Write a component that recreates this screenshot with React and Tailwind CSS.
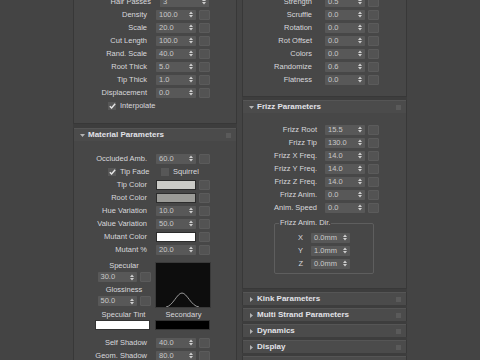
import React from 'react';

const Arrows = () => (
  <svg width="4" height="7" viewBox="0 0 4 7" className="shrink-0">
    <path d="M0 3 L2 0.5 L4 3 Z M0 4 L2 6.5 L4 4 Z" fill="#cfcfcf" />
  </svg>
);

const Spin = ({ value, w = 'w-[40px]' }) => (
  <div className={`${w} h-[10px] bg-[#585858] rounded-[1px] flex items-center justify-between pl-[3px] pr-[3px] text-[#c8c8c8]`}>
    <span className="leading-none">{value}</span>
    <Arrows />
  </div>
);

const Sq = () => <div className="w-[11px] h-[10px] ml-[3px] bg-[#535353] border border-[#5b5b5b] rounded-[1px]" />;

const Row = ({ label, value, pad, swatch }) => (
  <div className="flex items-center h-[13px]">
    <div className={`w-[82px] text-right leading-none ${pad}`}>{label}</div>
    {swatch ? (
      <div className={`w-[40px] h-[10px] border border-[#2c2c2c] ${swatch}`} />
    ) : (
      <Spin value={value} />
    )}
    <Sq />
  </div>
);

const Check = ({ on }) => (
  <div className="w-[8px] h-[8px] bg-[#575757] flex items-center justify-center">
    {on && (
      <svg width="7" height="6" viewBox="0 0 7 6">
        <path d="M0.8 3.2 L2.6 5 L6.2 0.8" stroke="#e6e6e6" strokeWidth="1.4" fill="none" />
      </svg>
    )}
  </div>
);

const Header = ({ title, open }) => (
  <div className="h-[13px] bg-[#4b4b4b] border-t border-[#555] flex items-center pl-[6px] pr-[5px]">
    <svg width="5" height="5" viewBox="0 0 5 5" className="shrink-0">
      {open ? <path d="M0 1 L5 1 L2.5 4 Z" fill="#b4b4b4" /> : <path d="M1 0 L4 2.5 L1 5 Z" fill="#b4b4b4" />}
    </svg>
    <span className="ml-[3px] font-bold text-[8px] text-[#e2e2e8] leading-none">{title}</span>
    <div className="ml-auto w-[5px] h-[5px] bg-[#5a5a5a]" />
  </div>
);

const hair = [
  ['Density', '100.0'],
  ['Scale', '20.0'],
  ['Cut Length', '100.0'],
  ['Rand. Scale', '40.0'],
  ['Root Thick', '5.0'],
  ['Tip Thick', '1.0'],
  ['Displacement', '0.0'],
];

const kink = [
  ['Scruffle', '0.0'],
  ['Rotation', '0.0'],
  ['Rot Offset', '0.0'],
  ['Colors', '0.0'],
  ['Randomize', '0.6'],
  ['Flatness', '0.0'],
];

const frizz = [
  ['Frizz Root', '15.5'],
  ['Frizz Tip', '130.0'],
  ['Frizz X Freq.', '14.0'],
  ['Frizz Y Freq.', '14.0'],
  ['Frizz Z Freq.', '14.0'],
  ['Frizz Anim.', '0.0'],
  ['Anim. Speed', '0.0'],
];

export default function App() {
  return (
    <div className="w-[480px] h-[360px] overflow-hidden bg-[#444444] flex font-['Liberation_Sans',Arial,sans-serif] text-[7.5px] text-[#d8d8dc]">
      <div className="w-[73px] shrink-0" />

      {/* left column */}
      <div className="w-[164px] shrink-0 bg-[#3d3d3d] flex flex-col gap-[4px]">
        <div className="-mt-[5px] bg-[#474747] border-x border-b border-[#383838] pb-[11px]">
          <div className="flex items-center h-[13px]">
            <div className="w-[86px] text-right pr-[9px] leading-none">Hair Passes</div>
            <div className="w-[49px] h-[10px] bg-[#585858] flex items-center justify-between pl-[3px] pr-[3px] text-[#c8c8c8]">
              <span className="leading-none">3</span>
              <Arrows />
            </div>
          </div>
          {hair.map(([l, v]) => (
            <Row key={l} label={l} value={v} pad="pr-[9px]" />
          ))}
          <div className="flex items-center h-[13px] pl-[34px]">
            <Check on />
            <span className="ml-[4px] leading-none">Interpolate</span>
          </div>
        </div>

        <div className="bg-[#474747] border-x border-[#383838] flex-1">
          <Header title="Material Parameters" open />
          <div className="pt-[11px]">
            <Row label="Occluded Amb." value="60.0" pad="pr-[9px]" />
            <div className="flex items-center h-[13px] pl-[34px]">
              <Check on />
              <span className="ml-[4px] leading-none w-[41px]">Tip Fade</span>
              <Check />
              <span className="ml-[4px] leading-none">Squirrel</span>
            </div>
            <Row label="Tip Color" pad="pr-[9px]" swatch="bg-[#cbcbc7]" />
            <Row label="Root Color" pad="pr-[9px]" swatch="bg-[#9b9b97]" />
            <Row label="Hue Variation" value="10.0" pad="pr-[9px]" />
            <Row label="Value Variation" value="50.0" pad="pr-[9px]" />
            <Row label="Mutant Color" pad="pr-[9px]" swatch="bg-white" />
            <Row label="Mutant %" value="20.0" pad="pr-[9px]" />

            <div className="flex mt-[6px] pl-[22px] h-[46px]">
              <div className="w-[56px] flex flex-col items-center">
                <div className="h-[8px] leading-none flex items-center">Specular</div>
                <div className="flex mt-[2px]">
                  <Spin value="30.0" w="w-[39px]" />
                  <Sq />
                </div>
                <div className="h-[9px] mt-[3px] leading-none flex items-center">Glossiness</div>
                <div className="flex mt-[2px]">
                  <Spin value="50.0" w="w-[39px]" />
                  <Sq />
                </div>
              </div>
              <div className="ml-[3px] w-[56px] h-[46px] bg-[#0d0d0d] border border-[#3a3a3a]">
                <svg width="54" height="44" viewBox="0 0 54 44">
                  <path d="M10 44 C17 43 21 30 26 30 C31 30 35 43 43 44" stroke="#9a9a9a" strokeWidth="1" fill="none" />
                </svg>
              </div>
            </div>

            <div className="flex pl-[22px] mt-[2px] h-[9px] items-center">
              <div className="w-[55px] text-center leading-none">Specular Tint</div>
              <div className="ml-[5px] w-[55px] text-center leading-none">Secondary</div>
            </div>
            <div className="flex pl-[21px] mt-[1px]">
              <div className="w-[55px] h-[10px] bg-white border border-[#333]" />
              <div className="ml-[5px] w-[55px] h-[10px] bg-black border border-[#333]" />
            </div>

            <div className="mt-[6px]">
              <Row label="Self Shadow" value="40.0" pad="pr-[9px]" />
              <Row label="Geom. Shadow" value="80.0" pad="pr-[9px]" />
            </div>
          </div>
        </div>
      </div>

      <div className="w-[5px] shrink-0" />

      {/* right column */}
      <div className="w-[165px] shrink-0 bg-[#3d3d3d] flex flex-col">
        <div className="-mt-[5px] bg-[#474747] border-x border-b border-[#383838] pb-[10px]">
          <Row label="Strength" value="0.5" pad="pr-[13px]" />
          {kink.map(([l, v]) => (
            <Row key={l} label={l} value={v} pad="pr-[13px]" />
          ))}
        </div>

        <div className="mt-[3px] bg-[#474747] border-x border-b border-[#383838] pb-[14px]">
          <Header title="Frizz Parameters" open />
          <div className="pt-[10px]">
            {frizz.map(([l, v]) => (
              <Row key={l} label={l} value={v} pad="pr-[8px]" />
            ))}
          </div>
          <div className="relative ml-[31px] mt-[9px] w-[100px] border border-[#5e5e5e] rounded-[2px] pt-[7px] pb-[3px]">
            <span className="absolute -top-[5px] left-[4px] px-[1px] bg-[#474747] leading-none">Frizz Anim. Dir.</span>
            {['X', 'Y', 'Z'].map((a, i) => (
              <div key={a} className="flex items-center h-[13px]">
                <div className="w-[36px] text-right pr-[8px] leading-none">{a}</div>
                <Spin value={i === 1 ? '1.0mm' : '0.0mm'} w="w-[39px]" />
              </div>
            ))}
          </div>
        </div>

        <div className="mt-[3px] flex flex-col gap-[3px]">
          {['Kink Parameters', 'Multi Strand Parameters', 'Dynamics', 'Display', 'Random Hair Tools'].map((t) => (
            <div key={t} className="border-x border-[#383838]">
              <Header title={t} />
            </div>
          ))}
        </div>
      </div>

      <div className="flex-1" />
    </div>
  );
}
